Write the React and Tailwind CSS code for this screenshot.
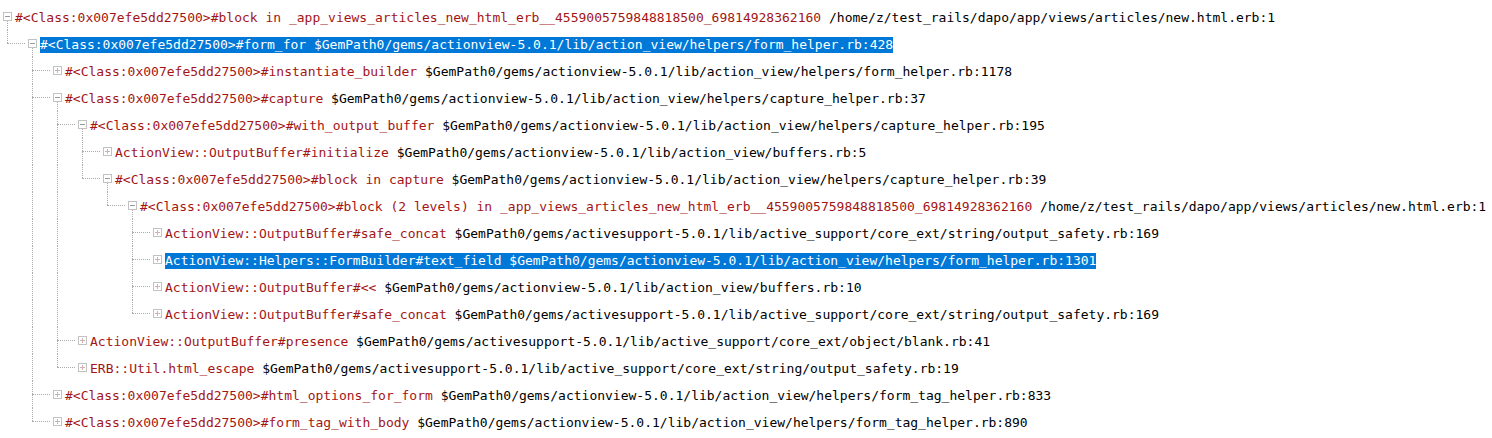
import React from "react";

const C = "#<Class:0x007efe5dd27500>";
const AV = "$GemPath0/gems/actionview-5.0.1/lib/action_view/";
const AS = "$GemPath0/gems/activesupport-5.0.1/lib/active_support/core_ext/";

const rows = [
  { l: 0, e: true, m: C + "#block in _app_views_articles_new_html_erb__4559005759848818500_69814928362160", p: "/home/z/test_rails/dapo/app/views/articles/new.html.erb:1" },
  { l: 1, e: true, sel: true, m: C + "#form_for", p: AV + "helpers/form_helper.rb:428" },
  { l: 2, e: false, m: C + "#instantiate_builder", p: AV + "helpers/form_helper.rb:1178" },
  { l: 2, e: true, m: C + "#capture", p: AV + "helpers/capture_helper.rb:37" },
  { l: 3, e: true, m: C + "#with_output_buffer", p: AV + "helpers/capture_helper.rb:195" },
  { l: 4, e: false, m: "ActionView::OutputBuffer#initialize", p: AV + "buffers.rb:5" },
  { l: 4, e: true, m: C + "#block in capture", p: AV + "helpers/capture_helper.rb:39" },
  { l: 5, e: true, m: C + "#block (2 levels) in _app_views_articles_new_html_erb__4559005759848818500_69814928362160", p: "/home/z/test_rails/dapo/app/views/articles/new.html.erb:1" },
  { l: 6, e: false, m: "ActionView::OutputBuffer#safe_concat", p: AS + "string/output_safety.rb:169" },
  { l: 6, e: false, sel: true, m: "ActionView::Helpers::FormBuilder#text_field", p: AV + "helpers/form_helper.rb:1301" },
  { l: 6, e: false, m: "ActionView::OutputBuffer#<<", p: AV + "buffers.rb:10" },
  { l: 6, e: false, m: "ActionView::OutputBuffer#safe_concat", p: AS + "string/output_safety.rb:169" },
  { l: 3, e: false, m: "ActionView::OutputBuffer#presence", p: AS + "object/blank.rb:41" },
  { l: 3, e: false, m: "ERB::Util.html_escape", p: AS + "string/output_safety.rb:19" },
  { l: 2, e: false, m: C + "#html_options_for_form", p: AV + "helpers/form_tag_helper.rb:833" },
  { l: 2, e: false, m: C + "#form_tag_with_body", p: AV + "helpers/form_tag_helper.rb:890" },
];

// does a later row at level `lvl` exist before any row with level < lvl
function hasLaterAt(i, lvl) {
  for (let j = i + 1; j < rows.length; j++) {
    if (rows[j].l < lvl) return false;
    if (rows[j].l === lvl) return true;
  }
  return false;
}

function Box({ expanded }) {
  return (
    <svg width="9" height="9" viewBox="0 0 9 9" shapeRendering="crispEdges" className="block">
      <rect x="0.5" y="0.5" width="8" height="8" fill="#ffffff" stroke="#c2c2c2" />
      <line x1="2" y1="4.5" x2="7" y2="4.5" stroke={expanded ? "#9a9a9a" : "#c9b3b3"} />
      {!expanded && <line x1="4.5" y1="2" x2="4.5" y2="7" stroke="#d6b0b0" />}
    </svg>
  );
}

const dot = "border-dotted border-[#ababab]";

function Row({ r, i }) {
  const cells = [];
  for (let k = 0; k < r.l; k++) {
    if (k === r.l - 1) {
      const cont = hasLaterAt(i, r.l);
      cells.push(
        <div key={k} className="w-[25px] shrink-0 flex flex-col">
          <div className={`h-[13px] ml-[7px] border-l ${dot}`} />
          <div className={`h-px ml-[7px] w-[18px] border-t ${dot}`} />
          {cont ? <div className={`flex-1 ml-[7px] border-l ${dot}`} /> : <div className="flex-1" />}
        </div>
      );
    } else {
      const cont = hasLaterAt(i, k + 1);
      cells.push(
        <div key={k} className="w-[25px] shrink-0 flex flex-col">
          {cont && <div className={`flex-1 ml-[7px] border-l ${dot}`} />}
        </div>
      );
    }
  }
  return (
    <div className="flex h-[27px] items-stretch">
      {cells}
      <div className="w-[15px] shrink-0 flex flex-col">
        <div className="h-[9px]" />
        <div className="ml-[3px]">
          <Box expanded={r.e} />
        </div>
        {r.e && <div className={`flex-1 ml-[7px] border-l ${dot}`} />}
      </div>
      <div className="pt-[7px]">
        <span
          className={`block h-[16px] leading-[16px] whitespace-pre ${r.sel ? "bg-[#0078d7] text-white" : ""}`}
        >
          <span className={r.sel ? "text-white" : "text-[#a31515]"}>{r.m}</span>
          <span className={r.sel ? "text-white" : "text-[#000000]"}>{" " + r.p}</span>
        </span>
      </div>
    </div>
  );
}

export default function App() {
  return (
    <div className="w-[1492px] h-[438px] bg-white overflow-hidden pt-[3px] font-['DejaVu_Sans_Mono',monospace] text-[13px]">
      {rows.map((r, i) => (
        <Row key={i} r={r} i={i} />
      ))}
    </div>
  );
}
